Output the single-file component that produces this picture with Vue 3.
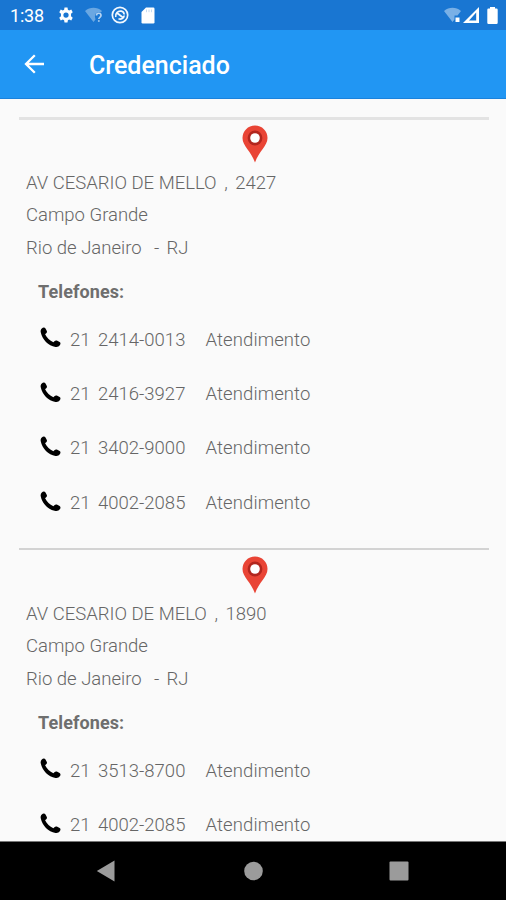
<template>
  <div class="screen">
    <header class="status-bar">
      <span class="clock">1:38</span>
      <svg class="gear" width="18" height="18" viewBox="0 0 24 24">
        <path fill="#fff" fill-rule="evenodd" d="M10 2h4l.5 3 1.700 1 2.800-1.200 2 3.500L18.700 10.400v3.200L21 15.700l-2 3.500-2.800-1.200-1.700 1-.5 3h-4l-.5-3-1.700-1L5 19.200l-2-3.500 2.300-2.100v-3.200L3 8.300l2-3.500L7.800 6l1.700-1zM12 8.500a3.500 3.500 0 1 0 0 7 3.500 3.500 0 0 0 0-7z" />
      </svg>
      <svg class="wifi-unknown" width="19" height="16" viewBox="0 0 19 16">
        <path fill="#6aa7e2" d="M0 4C5-.3 12-.3 17 4l-1.200 1.500C12 4.500 9.500 6.500 10 10l.5 2.500-2 2.500z" />
        <path fill="none" stroke="#b4d3f2" stroke-width="1.700" d="M11.500 8.500c0-3 4.500-3 4.500 0 0 1.800-2.200 1.800-2.200 3.500M13.800 13.300v1.500" />
      </svg>
      <svg class="sync" width="18" height="18" viewBox="0 0 18 18">
        <g fill="none" stroke="#f2f8ff" stroke-width="1.700">
          <circle cx="9" cy="9" r="7.700" />
          <path d="M4.800 11C3.800 7.500 7 4.500 10.300 5.200 12 5.600 13 7 13.200 8.500M13.200 9.500c-.2 2.700-3 4.200-5.700 3.300M5.500 6.500l7 5.500" />
        </g>
      </svg>
      <svg class="sd" width="14" height="17" viewBox="0 0 14 17">
        <path fill="#fff" d="M5 .5h7.300q1.200 0 1.200 1.200v13.600q0 1.200-1.200 1.200H1.700Q.5 16.500.5 15.300V5z" />
        <path stroke="#c5daf0" d="M5.500 2.500v2.700M8 2.500v2.700M10.500 2.500v2.700" />
      </svg>
      <span class="spacer"></span>
      <svg width="18" height="16" viewBox="0 0 18 16">
        <path fill="#79b0e6" d="M0 4C5-.3 12-.3 17 4l-3.500 4.500H10.500v4L8.500 15z" />
        <path fill="#fff" d="M11.500 10.500h4V15h-4z" />
      </svg>
      <svg class="signal" width="17" height="16" viewBox="0 0 17 16">
        <path fill="#fff" fill-rule="evenodd" d="M16 0v16H0zM13.200 5.500L6 13.600h7.200z" />
      </svg>
      <svg class="battery" width="11" height="17" viewBox="0 0 11 17">
        <path fill="#fff" d="M3 0h5v1.500h1.500q1.200 0 1.200 1.200v13q0 1.300-1.200 1.300h-8Q.3 17 .3 15.700v-13q0-1.200 1.200-1.200H3z" />
      </svg>
    </header>

    <div class="app-bar">
      <svg width="22" height="20" viewBox="0 0 22 20">
        <path fill="none" stroke="#fff" stroke-width="2.300" d="M20 10H2M10.800 1.200L2 10l8.800 8.800" />
      </svg>
      <h1>Credenciado</h1>
    </div>

    <main class="content">
      <section v-for="place in places" :key="place.address" class="place">
        <svg class="pin" width="26" height="38" viewBox="0 0 26 38">
          <path fill="#e94435" d="M13 .5C6 .5.500 6 .500 13c0 8 8.500 13 12.500 24.500C17 26 25.500 21 25.500 13 25.500 6 20 .500 13 .500z" />
          <circle cx="13" cy="13" r="7.400" fill="#b3261e" />
          <circle cx="13" cy="13" r="4.800" fill="#fff" />
        </svg>

        <div class="address">
          <p>{{ place.address }}<span class="comma">,</span>{{ place.number }}</p>
          <p>{{ place.district }}</p>
          <p>{{ place.city }}<span class="dash">-</span>{{ place.state }}</p>
        </div>

        <h2>Telefones:</h2>

        <div v-for="phone in place.phones" :key="phone" class="phone">
          <svg width="21" height="21" viewBox="0 0 21 21">
            <path d="M1.800 1.400C3 .4 4.700.2 5.500 1.500l1.200 2.200c.6 1.100.2 2.200-.8 2.900l-.8.700c1.800 3.500 4.600 6.300 8.300 7.900l1-1c.8-.8 1.900-1 2.900-.4l2.300 1.300c1.100.7 1.200 2 .3 3-1.200 1.700-2.500 2.200-4.400 1.900C8.300 18.900 2.200 12.600.8 5.600.4 3.800.7 2.400 1.800 1.400z" />
          </svg>
          <span class="ddd">21</span>
          <span class="number">{{ phone }}</span>
          <span class="kind">Atendimento</span>
        </div>
      </section>
    </main>

    <nav class="nav-bar">
      <svg width="20" height="22" viewBox="0 0 20 22">
        <path fill="#9b9b9b" d="M18.500.5v21L.8 11z" />
      </svg>
      <svg width="20" height="20" viewBox="0 0 20 20">
        <circle cx="10.500" cy="10" r="9.300" fill="#9b9b9b" />
      </svg>
      <svg width="20" height="20" viewBox="0 0 20 20">
        <rect x=".5" y=".5" width="19" height="19" rx="1" fill="#9b9b9b" />
      </svg>
    </nav>
  </div>
</template>

<script setup>
/* PLACES */
const places = [
  {
    address: 'AV CESARIO DE MELLO',
    number: '2427',
    district: 'Campo Grande',
    city: 'Rio de Janeiro',
    state: 'RJ',
    phones: ['2414-0013', '2416-3927', '3402-9000', '4002-2085'],
  },
  {
    address: 'AV CESARIO DE MELO',
    number: '1890',
    district: 'Campo Grande',
    city: 'Rio de Janeiro',
    state: 'RJ',
    phones: ['3513-8700', '4002-2085'],
  },
]
</script>

<style>
body {
  margin: 0;
}
</style>

<style scoped>
.screen {
  display: flex;
  flex-direction: column;
  width: 506px;
  height: 900px;
  overflow: hidden;
  background: #fafafa;
  font-family: Roboto, "Liberation Sans", sans-serif;
  color: #666;
}

svg {
  display: block;
  flex: none;
}

/* STATUS BAR */
.status-bar {
  display: flex;
  align-items: center;
  flex: none;
  box-sizing: border-box;
  height: 30px;
  padding: 0 8px 0 10px;
  background: #1976d2;
}

.clock {
  width: 47px;
  font-size: 18px;
  line-height: 30px;
  padding-top: 2px;
  box-sizing: border-box;
  letter-spacing: -0.2px;
  color: #fff;
}

.wifi-unknown {
  margin-left: 10px;
}

.sync {
  margin-left: 7px;
}

.sd {
  margin-left: 12px;
}

.spacer {
  flex: 1;
}

.signal {
  margin-left: 1px;
}

.battery {
  margin-left: 7px;
}

/* APP BAR */
.app-bar {
  display: flex;
  align-items: center;
  flex: none;
  box-sizing: border-box;
  height: 69px;
  padding-left: 24px;
  border-bottom: 1px solid #1b82dc;
  background: #2196f3;
}

.app-bar h1 {
  margin: 2px 0 0 43px;
  font-size: 25px;
  font-weight: 500;
  color: #fff;
}

/* CONTENT */
.content {
  flex: 1;
  min-height: 0;
  overflow: hidden;
  padding: 18px 17px 0 19px;
}

.place {
  box-sizing: border-box;
  height: 431px;
  padding: 6px 0 0 7px;
  border-top: 2px solid #d3d3d3;
}

.place:first-child {
  border-top: 3px solid #e3e3e3;
  padding-top: 5px;
}

.pin {
  margin: 0 auto;
  position: relative;
  left: -3px;
}

.address {
  padding-top: 4px;
}

.address p {
  margin: 0;
  height: 32.3px;
  font-size: 18.5px;
  font-weight: 300;
  line-height: 32.3px;
  white-space: nowrap;
}

.comma {
  margin: 0 7.500px;
}

.dash {
  margin: 0 7px 0 12.500px;
}

h2 {
  margin: 16px 0 21px 12px;
  font-size: 18px;
  font-weight: 700;
  line-height: 24px;
  letter-spacing: 0.1px;
  color: #6e6e6e;
}

.phone {
  display: flex;
  align-items: center;
  height: 24px;
  margin-bottom: 30.4px;
  padding-left: 14px;
  font-size: 18.5px;
  font-weight: 300;
}

.phone svg {
  margin-top: 2px;
}

.phone span {
  padding-top: 5.500px;
}

.ddd {
  width: 28px;
  margin-left: 9px;
}

.number {
  width: 107.5px;
}

.kind {
  letter-spacing: 0.1px;
}

/* NAVIGATION BAR */
.nav-bar {
  display: flex;
  align-items: center;
  justify-content: space-between;
  flex: none;
  box-sizing: border-box;
  height: 59px;
  padding: 0 97px 0 96px;
  border-top: 1px solid #777;
  background: #000;
}
</style>
